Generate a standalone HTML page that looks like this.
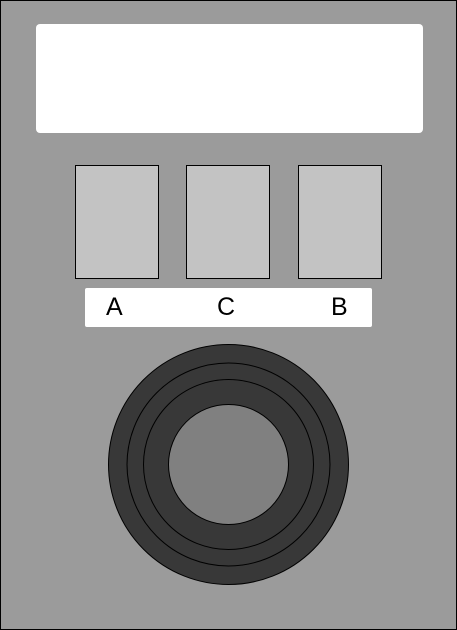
<!DOCTYPE html>
<html><head><style>
body{margin:0;width:457px;height:630px;overflow:hidden}
.f{position:absolute;left:0;top:0;width:455px;height:628px;background:#9b9b9b;border:1px solid #000}
.a{position:absolute}
.w{left:36px;top:24px;width:387px;height:109px;background:#fff;border-radius:4px}
.b{top:165px;width:82px;height:112px;background:#c3c3c3;border:1px solid #000}
.s{left:85px;top:288px;width:287px;height:39px;background:#fff;border-radius:2px}
.l{top:293px;font:25px "Liberation Sans",sans-serif;color:#000}
</style></head><body>
<div class="f"></div>
<div class="a w"></div>
<div class="a b" style="left:75px"></div>
<div class="a b" style="left:186px"></div>
<div class="a b" style="left:298px"></div>
<div class="a s"></div>
<div class="a l" style="left:106px">A</div>
<div class="a l" style="left:217px">C</div>
<div class="a l" style="left:331px">B</div>
<svg class="a" style="left:0;top:0" width="457" height="630">
<g stroke="#000" stroke-width="1">
<circle cx="228.5" cy="464.5" r="120" fill="#383838"/>
<circle cx="228.5" cy="464.5" r="101.5" fill="#383838"/>
<circle cx="228.5" cy="464.5" r="85" fill="#383838"/>
<circle cx="228.5" cy="464.5" r="60" fill="#808080"/>
</g></svg>
</body></html>
